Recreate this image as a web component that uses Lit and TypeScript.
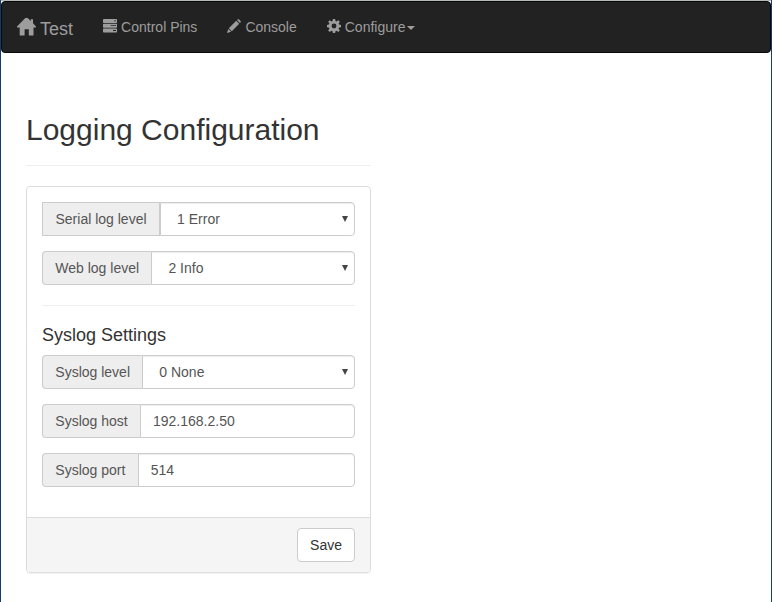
import { LitElement, html, svg, css } from "lit";
import { customElement, property } from "lit/decorators.js";

const icons: Record<string, unknown> = {
  home: svg`<path d="M9 0H10L13.700 3.700V2H16V6L19 9.300V10.200H16.500V18.300H11.800V12H7.600V18.300H2.700V10.200H0V9.300Z"/>`,
  tasks: svg`<path fill-rule="evenodd" d="M.7 0h12.6q.7 0 .7.7v2.600q0 .7-.7.7H.7Q0 4 0 3.300V.7Q0 0 .7 0ZM11 1.500v.8h2v-.8ZM.7 4.800h12.600q.7 0 .7.7V8q0 .7-.7.7H.7Q0 8.700 0 8V5.500q0-.7.7-.7ZM7.800 6.300v.8h5.200v-.8ZM.7 9.500h12.600q.7 0 .7.7v2.500q0 .7-.7.7H.7q-.7 0-.7-.7v-2.500q0-.7.7-.7ZM10 11v.9h3V11Z"/>`,
  pencil: svg`<path d="M0 14 1.200 9.900 4.100 12.800ZM1.800 9.200 9.200 1.800 12.200 4.800 4.800 12.200ZM10 1.100 10.700.4Q11.400-.2 12 .4L13.600 2Q14.200 2.600 13.600 3.300L12.900 4Z"/>`,
  cog: svg`<path fill-rule="evenodd" d="M5.900 0h2.200l.4 2 1.100.5L11.300 1.300l1.500 1.500-1.200 1.700.5 1.100 1.900.4v2.200l-1.900.4-.5 1.100 1.200 1.700-1.500 1.500-1.700-1.200-1.100.5-.4 1.800H5.900l-.4-1.800-1.100-.5-1.700 1.200-1.500-1.500 1.200-1.700-.5-1.100L0 8.200V6l1.900-.4.500-1.100L1.200 2.800l1.500-1.500 1.700 1.200L5.500 2ZM7 4.600a2.450 2.450 0 1 0 0 4.900 2.450 2.450 0 0 0 0-4.900Z"/>`,
};

@customElement("nav-link")
class NavLink extends LitElement {
  @property() icon = "";
  @property() label = "";
  @property({ type: Boolean }) menu = false;
  static styles = css`
    :host { display: block; }
    a { display: flex; padding: 15px; line-height: 20px; color: #9d9d9d; text-decoration: none; white-space: pre; }
    svg { width: 14px; height: 14px; margin: 2px 4px 0 0; fill: currentColor; overflow: visible; }
    .caret { width: 0; height: 0; margin: 9px 0 0 2px; border-top: 4px solid; border-left: 4px solid transparent; border-right: 4px solid transparent; }
  `;
  render() {
    return html`<a href="#"><svg viewBox="0 0 14 14">${icons[this.icon]}</svg><span>${this.label}</span>${this.menu ? html`<span class="caret"></span>` : ""}</a>`;
  }
}

@customElement("form-field")
class FormField extends LitElement {
  @property() label = "";
  @property() value = "";
  @property({ type: Boolean }) choice = false;
  @property({ type: Boolean }) square = false;
  static styles = css`
    :host { display: block; margin-bottom: 15px; }
    .group { display: flex; height: 34px; }
    label { flex: none; box-sizing: border-box; padding: 0 12.3px; line-height: 32px; border: 1px solid #ccc; border-right: 0; border-radius: 4px 0 0 4px; background: #eee; color: #555; white-space: nowrap; }
    .square label { padding: 0 12.5px; border-right: 1px solid #ccc; border-radius: 0; }
    .control { flex: 1; min-width: 0; display: grid; grid-template: 34px / 1fr; }
    input, select { grid-area: 1 / 1; appearance: none; box-sizing: border-box; width: 100%; height: 34px; margin: 0; padding: 6px 12px; border: 1px solid #ccc; border-radius: 0 4px 4px 0; background: #fff; box-shadow: inset 0 1px 1px rgba(0, 0, 0, 0.075); color: #555; font: 14px/20px "Liberation Sans", Arial, sans-serif; outline: 0; }
    select { padding-left: 16px; }
    svg { grid-area: 1 / 1; justify-self: end; width: 6px; height: 6px; margin: 14px 7px 0 0; fill: #444; pointer-events: none; z-index: 1; }
  `;
  render() {
    return html`<div class="group ${this.square ? "square" : ""}">
      <label>${this.label}</label>
      <div class="control">
        ${this.choice
          ? html`<select><option selected>${this.value}</option></select><svg viewBox="0 0 6 6"><path d="M0 0h6L3 6Z"/></svg>`
          : html`<input .value=${this.value} />`}
      </div>
    </div>`;
  }
}

@customElement("app-root")
class AppRoot extends LitElement {
  static styles = css`
    :host { display: block; box-sizing: border-box; height: 602px; overflow: hidden; background: #fff; border: solid #133c70; border-width: 0 1px; font: 14px/20px "Liberation Sans", Arial, sans-serif; color: #333; }
    .edge { height: 1px; background: #b5bab7; }
    nav { display: flex; box-sizing: border-box; height: 52px; border: 1px solid #080808; border-radius: 4px; background: #222; }
    .brand { display: flex; padding: 15px 15.1px 15px 15px; color: #9d9d9d; font-size: 18px; line-height: 20px; text-decoration: none; }
    .brand svg { width: 19px; height: 19px; margin: 1px 4px 0 0; fill: currentColor; }
    .brand span { padding-top: 2px; }
    main { width: 345px; margin: 60px 0 0 25px; }
    h1 { margin: 0 0 20px; padding-bottom: 19px; border-bottom: 1px solid #eee; font-size: 30px; font-weight: 500; line-height: 33px; }
    .panel { border: 1px solid #ddd; border-radius: 4px; box-shadow: 0 1px 1px rgba(0, 0, 0, 0.05); overflow: hidden; }
    .body { padding: 15px; }
    hr { margin: 20px 0; border: 0; border-top: 1px solid #eee; }
    h4 { margin: 0 0 10px; font-size: 18px; font-weight: 500; line-height: 19px; }
    footer { display: flex; justify-content: flex-end; padding: 10px 15px; background: #f5f5f5; border-top: 1px solid #ddd; }
    button { box-sizing: border-box; height: 34px; padding: 6px 12px; border: 1px solid #ccc; border-radius: 4px; background: #fff; color: #333; font: inherit; }
  `;
  render() {
    return html`
      <div class="edge"></div>
      <nav>
        <a class="brand" href="#"><svg viewBox="0 .7 19 19">${icons.home}</svg><span>Test</span></a>
        <nav-link icon="tasks" label="Control Pins"></nav-link>
        <nav-link icon="pencil" label="Console"></nav-link>
        <nav-link icon="cog" label="Configure" menu></nav-link>
      </nav>
      <main>
        <h1>Logging Configuration</h1>
        <div class="panel">
          <div class="body">
            <form-field label="Serial log level" value="1 Error" choice square></form-field>
            <form-field label="Web log level" value="2 Info" choice></form-field>
            <hr />
            <h4>Syslog Settings</h4>
            <form-field label="Syslog level" value="0 None" choice></form-field>
            <form-field label="Syslog host" value="192.168.2.50"></form-field>
            <form-field label="Syslog port" value="514"></form-field>
          </div>
          <footer><button>Save</button></footer>
        </div>
      </main>`;
  }
}
